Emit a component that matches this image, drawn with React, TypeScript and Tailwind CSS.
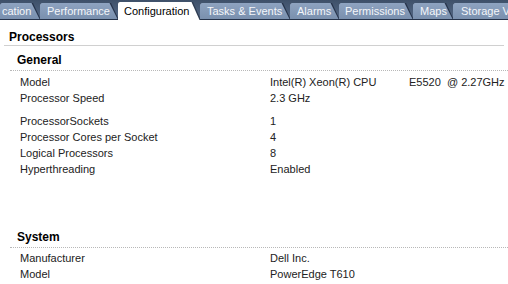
const tabs = [
    { label: 'cation', w: 'w-[41px]', pl: 'pl-[2px]' },
    { label: 'Performance', w: 'w-[79px]', pl: 'pl-[7px]' },
    { label: 'Configuration', w: 'w-[83px]', pl: 'pl-[6px]', active: true },
    { label: 'Tasks & Events', w: 'w-[91px]', pl: 'pl-[7px]' },
    { label: 'Alarms', w: 'w-[50px]', pl: 'pl-[7px]' },
    { label: 'Permissions', w: 'w-[75px]', pl: 'pl-[6px]' },
    { label: 'Maps', w: 'w-[41px]', pl: 'pl-[7px]' },
    { label: 'Storage Views', w: 'w-[90px]', pl: 'pl-[8px]' },
];

const general = [
    ['Model', 'cpu'],
    ['Processor Speed', '2.3 GHz'],
];

const cores = [
    ['ProcessorSockets', '1'],
    ['Processor Cores per Socket', '4'],
    ['Logical Processors', '8'],
    ['Hyperthreading', 'Enabled'],
];

const system = [
    ['Manufacturer', 'Dell Inc.'],
    ['Model', 'PowerEdge T610'],
];

const Row = ({ label, value }: { label: string; value: string }) => (
    <div className="flex h-[16px] items-center text-[#222]">
        <div className="w-[270px] shrink-0 pl-[20px]">{label}</div>
        {value === 'cpu' ? (
            <div className="flex whitespace-pre">
                <span className="w-[139px]">Intel(R) Xeon(R) CPU</span>
                <span>E5520  @ 2.27GHz</span>
            </div>
        ) : (
            <div className="whitespace-pre">{value}</div>
        )}
    </div>
);

const App = () => {
    return (
        <div className="w-[508px] h-[284px] overflow-hidden bg-white text-[11px] font-['Liberation_Sans',sans-serif]">
            {/* tab strip */}
            <div className="flex items-end h-[20px] bg-[linear-gradient(#3e5069,#566a88)] overflow-hidden">
                {tabs.map((t) => (
                    <div
                        key={t.label}
                        className={`${t.w} shrink-0 -mr-[1px] ${t.active ? 'h-[18px] bg-[#2f3d52]' : 'h-[17px] bg-[#26334a]'} [clip-path:polygon(0_0,calc(100%-8px)_0,100%_100%,0_100%)] flex`}
                    >
                        <div
                            className={`flex-1 mr-[1.5px] ${t.active ? 'bg-white text-black' : 'bg-[linear-gradient(#8ea3c0,#7a90ae)] text-[#f4f6fa] mb-[1px]'} [clip-path:polygon(0_0,calc(100%-8px)_0,100%_100%,0_100%)] rounded-tl-[2px] flex items-center ${t.pl}`}
                        >
                            <span className="whitespace-nowrap leading-none">{t.label}</span>
                        </div>
                    </div>
                ))}
            </div>

            <div className="pt-[10px]">
                <div className="px-[9px] font-bold text-black text-[12px] leading-[15px]">Processors</div>
                <div className="mx-[4px] border-b border-[#d0d0d0]" />

                <div className="pt-[7px] pl-[17px] font-bold text-black text-[12px] leading-[14px]">General</div>
                <div className="ml-[10px] mt-[3px] border-b border-dotted border-[#b8b8b8]" />
                <div className="pt-[3px]">
                    {general.map(([l, v]) => (
                        <Row key={l} label={l} value={v} />
                    ))}
                </div>
                <div className="pt-[7px]">
                    {cores.map(([l, v]) => (
                        <Row key={l} label={l} value={v} />
                    ))}
                </div>

                <div className="pt-[53px] pl-[17px] font-bold text-black text-[12px] leading-[14px]">System</div>
                <div className="ml-[10px] mt-[3px] border-b border-dotted border-[#b8b8b8]" />
                <div className="pt-[2px]">
                    {system.map(([l, v]) => (
                        <Row key={l} label={l} value={v} />
                    ))}
                </div>
            </div>
        </div>
    );
};

export default App;
